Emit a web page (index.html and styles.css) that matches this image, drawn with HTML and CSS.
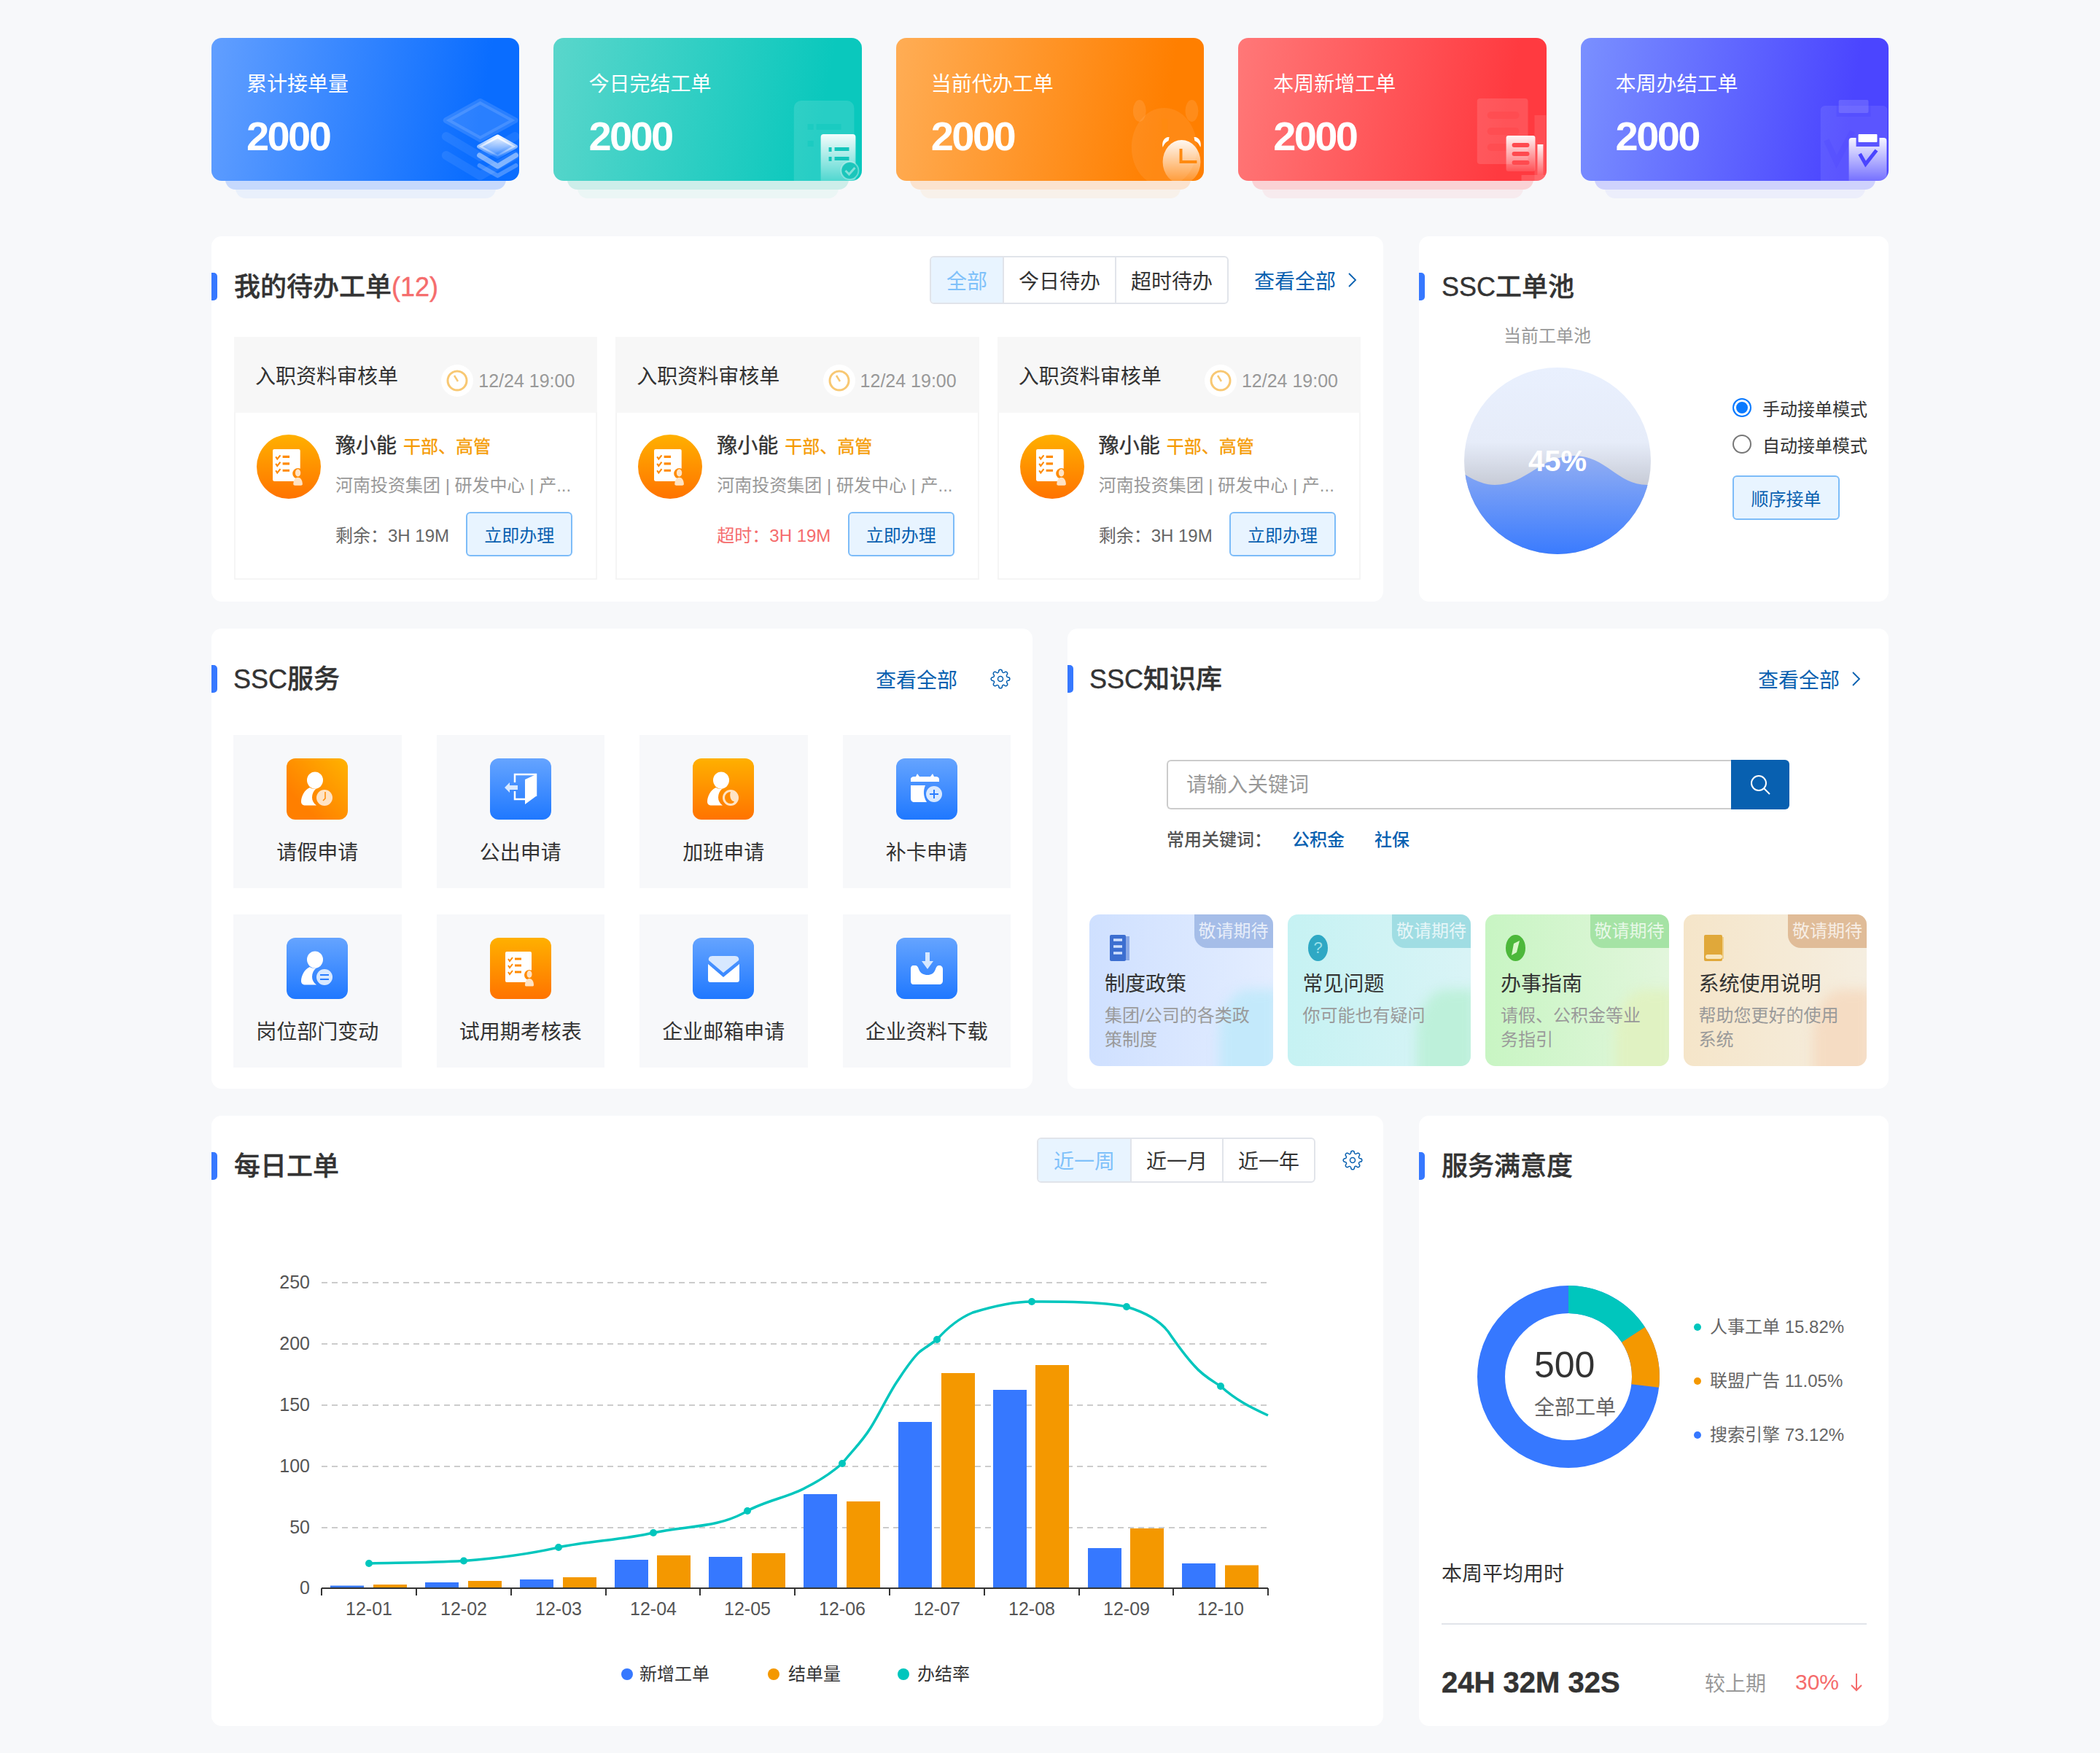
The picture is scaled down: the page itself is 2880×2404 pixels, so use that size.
FILE: index.html
```html
<!DOCTYPE html>
<html lang="zh-CN">

<head>
  <meta charset="UTF-8">
  <title>SSC工作台</title>
  <link rel="stylesheet" href="styles.css">
</head>

<body>
  <svg class="defs" width="0" height="0">
    <defs>
      <linearGradient id="fade" x1="0" y1="0" x2="0" y2="1">
        <stop offset="0" stop-color="#fff" stop-opacity=".95" />
        <stop offset="1" stop-color="#fff" stop-opacity=".12" />
      </linearGradient>
      <linearGradient id="gradBlue" x1="0" y1="0" x2="0" y2="1">
        <stop offset="0" stop-color="#65a4ff" />
        <stop offset="1" stop-color="#1f78ff" />
      </linearGradient>
      <linearGradient id="gradOrange" x1="0" y1="0" x2="0" y2="1">
        <stop offset="0" stop-color="#ffb000" />
        <stop offset="1" stop-color="#ff7300" />
      </linearGradient>
      <linearGradient id="gradDiag" x1="1" y1="0" x2="0" y2="1">
        <stop offset="0" stop-color="#ffb300" />
        <stop offset=".75" stop-color="#ff7f00" />
      </linearGradient>
      <linearGradient id="liquidBg" x1="0" y1="0" x2="0" y2="1">
        <stop offset="0" stop-color="#e9f0fe" />
        <stop offset=".4" stop-color="#e6ecf9" />
        <stop offset=".65" stop-color="#c4c8d3" />
      </linearGradient>
      <linearGradient id="liquidWater" x1="0" y1="0" x2="0" y2="1">
        <stop offset="0" stop-color="#92aef3" />
        <stop offset="1" stop-color="#3a7bfe" />
      </linearGradient>
      <symbol id="person" viewBox="0 0 84 84">
        <ellipse cx="39" cy="30" rx="11" ry="11.5" fill="#fff" />
        <path d="M32 40c-8 3-12 13-12 19 0 4 2 5.500 6 5.500h15c-4-3-6-6.500-6-11 0-5 2-9 6-12.500-3 1-7 1-9-1z" fill="#fff" />
      </symbol>
      <symbol id="checklist" viewBox="0 0 84 84">
        <rect x="21" y="19" width="36" height="42" rx="2" fill="#fff" />
        <path d="M25 29l2 3 4-5M25 38l2 3 4-5M25 47l2 3 4-5" fill="none" stroke="#ff8a00" stroke-width="2" />
        <path d="M34 29h9M34 38h9M34 47h9" stroke="#ff8a00" stroke-width="3" />
        <circle cx="54" cy="51" r="7" fill="#ff8a00" />
        <ellipse cx="54" cy="50" rx="3.500" ry="5" fill="#ffe3c4" />
        <path d="M48 65c0-6 3-9 6-9s6 3 6 9c0 1-1 1.500-2 1.500h-8c-1 0-2-.5-2-1.500z" fill="#ffe3c4" />
      </symbol>
      <symbol id="gear" viewBox="0 0 24 24">
        <g fill="none" stroke="#0860b0" stroke-width="1.300">
          <circle cx="12" cy="12" r="3" />
          <path d="M19.400 15a1.650 1.650 0 0 0 .33 1.820l.06.06a2 2 0 0 1 0 2.830 2 2 0 0 1-2.830 0l-.06-.06a1.650 1.650 0 0 0-1.820-.33 1.650 1.650 0 0 0-1 1.510V21a2 2 0 0 1-2 2 2 2 0 0 1-2-2v-.09A1.650 1.650 0 0 0 9 19.400a1.650 1.650 0 0 0-1.820.33l-.06.06a2 2 0 0 1-2.830 0 2 2 0 0 1 0-2.830l.06-.06a1.650 1.650 0 0 0 .33-1.820 1.650 1.650 0 0 0-1.510-1H3a2 2 0 0 1-2-2 2 2 0 0 1 2-2h.09A1.650 1.650 0 0 0 4.600 9a1.650 1.650 0 0 0-.33-1.820l-.06-.06a2 2 0 0 1 0-2.830 2 2 0 0 1 2.830 0l.06.06a1.650 1.650 0 0 0 1.820.33H9a1.650 1.650 0 0 0 1-1.510V3a2 2 0 0 1 2-2 2 2 0 0 1 2 2v.09a1.650 1.650 0 0 0 1 1.510 1.650 1.650 0 0 0 1.820-.33l.06-.06a2 2 0 0 1 2.830 0 2 2 0 0 1 0 2.830l-.06.06a1.650 1.650 0 0 0-.33 1.820V9a1.650 1.650 0 0 0 1.510 1H21a2 2 0 0 1 2 2 2 2 0 0 1-2 2h-.09a1.650 1.650 0 0 0-1.510 1z" />
        </g>
      </symbol>
      <symbol id="chevron" viewBox="0 0 16 24">
        <path d="M4 3l9 9-9 9" fill="none" stroke="#0860b0" stroke-width="1.800" />
      </symbol>
      <symbol id="timer" viewBox="0 0 44 44">
        <circle cx="22" cy="22" r="22" fill="#fff" />
        <circle cx="22" cy="22" r="13" fill="none" stroke="#f8c873" stroke-width="3" />
        <path d="M18 15l5 8" stroke="#f8c873" stroke-width="2.500" />
      </symbol>
    </defs>
  </svg>

  <div class="page">

    <!-- top numbers -->
    <div class="stats">
      <div class="stat stat-blue">
        <div class="stat-body">
          <p class="stat-label">累计接单量</p>
          <p class="stat-num">2000</p>
          <svg class="stat-deco" viewBox="0 0 424 196" preserveAspectRatio="none">
            <path d="M370 87L418 113 370 139 323 113z" fill="#fff" fill-opacity=".13" stroke="#fff" stroke-opacity=".13" stroke-width="8" stroke-linejoin="round" />
            <path d="M323 135l47 28 48-28M323 161l47 28 48-28" fill="none" stroke="#fff" stroke-opacity=".08" stroke-width="12" stroke-linecap="round" stroke-linejoin="round" />
            <path d="M394 135L419 149 394 163 368 149z" fill="url(#fade)" stroke="url(#fade)" stroke-width="5" stroke-linejoin="round" />
            <path d="M369 161l25 15 25-15" fill="none" stroke="#fff" stroke-opacity=".45" stroke-width="7" stroke-linecap="round" stroke-linejoin="round" />
            <path d="M369 175l25 14 25-14" fill="none" stroke="#fff" stroke-opacity=".25" stroke-width="6" stroke-linecap="round" stroke-linejoin="round" />
          </svg>
        </div>
      </div>
      <div class="stat stat-teal">
        <div class="stat-body">
          <p class="stat-label">今日完结工单</p>
          <p class="stat-num">2000</p>
          <svg class="stat-deco" viewBox="0 0 424 196" preserveAspectRatio="none">
            <rect x="331" y="86" width="83" height="120" rx="10" fill="#fff" fill-opacity=".12" />
            <path d="M350 118h8v8h-8zM362 118h34v8h-34zM350 141h8v8h-8z" fill="#0ac8bd" fill-opacity=".45" />
            <rect x="368" y="132" width="48" height="70" rx="4" fill="url(#fade)" />
            <path d="M379 150h4v6h-4zM387 150h20v5h-20zM379 163h4v6h-4zM387 163h20v5h-20z" fill="#13c5bb" />
            <circle cx="408" cy="182" r="12" fill="#1ac6bb" stroke="#fff" stroke-opacity=".35" stroke-width="2" />
            <path d="M402 182l5 5 8-9" fill="none" stroke="#fff" stroke-opacity=".45" stroke-width="3" />
          </svg>
        </div>
      </div>
      <div class="stat stat-orange">
        <div class="stat-body">
          <p class="stat-label">当前代办工单</p>
          <p class="stat-num">2000</p>
          <svg class="stat-deco" viewBox="0 0 424 196" preserveAspectRatio="none">
            <ellipse cx="369" cy="150" rx="45" ry="54" fill="#fff" fill-opacity=".08" />
            <ellipse cx="335" cy="100" rx="9" ry="15" fill="#fff" fill-opacity=".1" />
            <ellipse cx="407" cy="100" rx="9" ry="15" fill="#fff" fill-opacity=".1" />
            <path d="M366 111h8v40h-8z" fill="#ff8a10" />
            <ellipse cx="393" cy="170" rx="26" ry="30" fill="url(#fade)" />
            <path d="M367 150c-2-8 3-15 9-14l-1 5c-3 1-6 4-8 9zM419 150c2-8-3-15-9-14l1 5c3 1 6 4 8 9z" fill="#fff" />
            <path d="M390 152h4v16h20v4h-24z" fill="#ff8a10" />
          </svg>
        </div>
      </div>
      <div class="stat stat-red">
        <div class="stat-body">
          <p class="stat-label">本周新增工单</p>
          <p class="stat-num">2000</p>
          <svg class="stat-deco" viewBox="0 0 424 196" preserveAspectRatio="none">
            <rect x="329" y="83" width="70" height="90" rx="4" fill="#fff" fill-opacity=".13" />
            <rect x="343" y="101" width="44" height="10" rx="5" fill="#ff4a4f" fill-opacity=".7" />
            <rect x="343" y="123" width="44" height="10" rx="5" fill="#ff4a4f" fill-opacity=".7" />
            <rect x="343" y="145" width="44" height="10" rx="5" fill="#ff4a4f" fill-opacity=".7" />
            <rect x="408" y="106" width="16" height="90" fill="#fff" fill-opacity=".1" />
            <rect x="390" y="188" width="34" height="8" fill="#fff" fill-opacity=".15" />
            <rect x="369" y="134" width="40" height="49" rx="3" fill="url(#fade)" />
            <rect x="377" y="144" width="24" height="6" rx="3" fill="#ff4a4f" />
            <rect x="377" y="156" width="24" height="6" rx="3" fill="#ff4a4f" />
            <rect x="377" y="168" width="24" height="6" rx="3" fill="#ff4a4f" />
            <rect x="412" y="146" width="8" height="42" fill="url(#fade)" />
          </svg>
        </div>
      </div>
      <div class="stat stat-indigo">
        <div class="stat-body">
          <p class="stat-label">本周办结工单</p>
          <p class="stat-num">2000</p>
          <svg class="stat-deco" viewBox="0 0 424 196" preserveAspectRatio="none">
            <rect x="330" y="93" width="92" height="110" rx="6" fill="#fff" fill-opacity=".09" />
            <rect x="352" y="93" width="47" height="15" fill="#4b45ff" fill-opacity=".35" />
            <rect x="355" y="85" width="41" height="18" rx="2" fill="#fff" fill-opacity=".15" />
            <path d="M338 140l14 30 22-42" fill="none" stroke="#4b45ff" stroke-opacity=".25" stroke-width="8" />
            <rect x="369" y="137" width="52" height="62" rx="4" fill="url(#fade)" />
            <rect x="379" y="136" width="32" height="13" fill="#5a55ff" />
            <rect x="382" y="132" width="26" height="11" rx="1" fill="#fff" />
            <path d="M384 159l8 14 15-19" fill="none" stroke="#4b45ff" stroke-width="5" />
          </svg>
        </div>
      </div>
    </div>

    <div class="row row-wide">
      <!-- pending orders -->
      <section class="panel panel-todo">
        <div class="panel-head">
          <span class="bar"></span>
          <h2 class="panel-title">我的待办工单<span class="count">(12)</span></h2>
          <div class="head-right head-lift">
            <div class="tabs">
              <span class="tab active">全部</span>
              <span class="tab">今日待办</span>
              <span class="tab">超时待办</span>
            </div>
            <a class="more">查看全部</a>
            <svg class="chevron" width="16" height="24"><use href="#chevron" /></svg>
          </div>
        </div>
        <div class="orders">
          <div class="order">
            <div class="order-head">
              <span class="order-name">入职资料审核单</span>
              <span class="order-time"><svg width="44" height="44"><use href="#timer" /></svg>12/24 19:00</span>
            </div>
            <div class="order-body">
              <svg class="avatar" width="88" height="88" viewBox="0 0 84 84"><circle cx="42" cy="42" r="42" fill="url(#gradOrange)" /><use href="#checklist" width="84" height="84" /></svg>
              <div class="order-info">
                <p class="order-user">豫小能<span class="order-tags">干部、高管</span></p>
                <p class="order-org">河南投资集团 | 研发中心 | 产...</p>
                <div class="order-foot">
                  <span class="order-left">剩余：3H 19M</span>
                  <button class="btn">立即办理</button>
                </div>
              </div>
            </div>
          </div>
          <div class="order">
            <div class="order-head">
              <span class="order-name">入职资料审核单</span>
              <span class="order-time"><svg width="44" height="44"><use href="#timer" /></svg>12/24 19:00</span>
            </div>
            <div class="order-body">
              <svg class="avatar" width="88" height="88" viewBox="0 0 84 84"><circle cx="42" cy="42" r="42" fill="url(#gradOrange)" /><use href="#checklist" width="84" height="84" /></svg>
              <div class="order-info">
                <p class="order-user">豫小能<span class="order-tags">干部、高管</span></p>
                <p class="order-org">河南投资集团 | 研发中心 | 产...</p>
                <div class="order-foot">
                  <span class="order-left late">超时：3H 19M</span>
                  <button class="btn">立即办理</button>
                </div>
              </div>
            </div>
          </div>
          <div class="order">
            <div class="order-head">
              <span class="order-name">入职资料审核单</span>
              <span class="order-time"><svg width="44" height="44"><use href="#timer" /></svg>12/24 19:00</span>
            </div>
            <div class="order-body">
              <svg class="avatar" width="88" height="88" viewBox="0 0 84 84"><circle cx="42" cy="42" r="42" fill="url(#gradOrange)" /><use href="#checklist" width="84" height="84" /></svg>
              <div class="order-info">
                <p class="order-user">豫小能<span class="order-tags">干部、高管</span></p>
                <p class="order-org">河南投资集团 | 研发中心 | 产...</p>
                <div class="order-foot">
                  <span class="order-left">剩余：3H 19M</span>
                  <button class="btn">立即办理</button>
                </div>
              </div>
            </div>
          </div>
        </div>
      </section>

      <!-- order pool -->
      <section class="panel panel-pool">
        <div class="panel-head">
          <span class="bar"></span>
          <h2 class="panel-title">SSC工单池</h2>
        </div>
        <div class="pool">
          <div class="pool-left">
            <p class="pool-label">当前工单池</p>
            <svg class="liquid" width="256" height="256" viewBox="0 0 256 256">
              <clipPath id="liquidClip"><circle cx="128" cy="128" r="128" /></clipPath>
              <g clip-path="url(#liquidClip)">
                <rect width="256" height="256" fill="url(#liquidBg)" />
                <path d="M0 146C14 155 28 161 42 161 85 161 105 121 151 121 195 121 210 161 251 161H256V256H0z" fill="url(#liquidWater)" />
              </g>
              <text class="liquid-text" x="128" y="142" text-anchor="middle">45%</text>
            </svg>
          </div>
          <div class="pool-right">
            <label class="radio"><span class="radio-dot on"></span>手动接单模式</label>
            <label class="radio"><span class="radio-dot"></span>自动接单模式</label>
            <button class="btn btn-seq">顺序接单</button>
          </div>
        </div>
      </section>
    </div>

    <div class="row row-half">
      <!-- services -->
      <section class="panel panel-service">
        <div class="panel-head">
          <span class="bar"></span>
          <h2 class="panel-title">SSC服务</h2>
          <div class="head-right">
            <a class="more">查看全部</a>
            <svg class="gear" width="28" height="28"><use href="#gear" /></svg>
          </div>
        </div>
        <div class="services">
          <div class="service">
            <svg class="service-icon" width="84" height="84" viewBox="0 0 84 84">
              <rect width="84" height="84" rx="12" fill="url(#gradDiag)" />
              <use href="#person" width="84" height="84" />
              <circle cx="52" cy="54" r="11" fill="#ffe3c4" />
              <path d="M53 46v9l-3 3" fill="none" stroke="#ff8a00" stroke-width="1.500" />
            </svg>
            <span>请假申请</span>
          </div>
          <div class="service">
            <svg class="service-icon" width="84" height="84" viewBox="0 0 84 84">
              <rect width="84" height="84" rx="12" fill="url(#gradBlue)" />
              <path d="M34 33V22H63V52M34 45V56H48" fill="none" stroke="#fff" stroke-width="2.500" />
              <path d="M48 29L63 22V52L48 63z" fill="#fff" />
              <path d="M20 40l7-7v4h11v6H27v4z" fill="#d7e8ff" />
            </svg>
            <span>公出申请</span>
          </div>
          <div class="service">
            <svg class="service-icon" width="84" height="84" viewBox="0 0 84 84">
              <rect width="84" height="84" rx="12" fill="url(#gradOrange)" />
              <use href="#person" width="84" height="84" />
              <circle cx="52" cy="54" r="11" fill="#ffe3c4" />
              <path d="M52 46a8 8 0 0 0 0 16c3 0 5-2 5-3-5 0-7-8-5-13z" fill="#ff8a00" />
            </svg>
            <span>加班申请</span>
          </div>
          <div class="service">
            <svg class="service-icon" width="84" height="84" viewBox="0 0 84 84">
              <rect width="84" height="84" rx="12" fill="url(#gradBlue)" />
              <path d="M20 32v-3c0-3 2-4 5-4h2l2-4 3 4h15l3-4 2 4h2c3 0 5 1 5 4v3z" fill="#fff" />
              <path d="M20 37h20c-3 7-3 15 2 23H25c-3 0-5-2-5-5z" fill="#fff" />
              <circle cx="52" cy="49" r="11" fill="#d7e8ff" />
              <path d="M52 43v12M46 49h12" stroke="#2a7dff" stroke-width="2" />
            </svg>
            <span>补卡申请</span>
          </div>
          <div class="service">
            <svg class="service-icon" width="84" height="84" viewBox="0 0 84 84">
              <rect width="84" height="84" rx="12" fill="url(#gradBlue)" />
              <use href="#person" width="84" height="84" />
              <circle cx="52" cy="54" r="11" fill="#d7e8ff" />
              <path d="M46 51h12M46 57h12" stroke="#2a7dff" stroke-width="2" />
            </svg>
            <span>岗位部门变动</span>
          </div>
          <div class="service">
            <svg class="service-icon" width="84" height="84" viewBox="0 0 84 84">
              <rect width="84" height="84" rx="12" fill="url(#gradOrange)" />
              <use href="#checklist" width="84" height="84" />
            </svg>
            <span>试用期考核表</span>
          </div>
          <div class="service">
            <svg class="service-icon" width="84" height="84" viewBox="0 0 84 84">
              <rect width="84" height="84" rx="12" fill="url(#gradBlue)" />
              <path d="M21 36l21 18 22-18v21c0 3-1 4-4 4H25c-3 0-4-1-4-4z" fill="#fff" />
              <path d="M27 25h31c4 0 6 3 5 6L42 48 22 31c-1-3 1-6 5-6z" fill="#d7e8ff" />
            </svg>
            <span>企业邮箱申请</span>
          </div>
          <div class="service">
            <svg class="service-icon" width="84" height="84" viewBox="0 0 84 84">
              <rect width="84" height="84" rx="12" fill="url(#gradBlue)" />
              <path d="M24 38h2c3 0 4 2 5 5 2 6 7 8 12 8s9-2 11-8c1-3 2-5 5-5 3 0 5 2 5 5v16c0 3-2 5-5 5H24c-3 0-4-2-4-5V43c0-3 1-5 4-5z" fill="#fff" />
              <path d="M40 20h6v12h5l-8 11-8-11h5z" fill="#d7e8ff" />
            </svg>
            <span>企业资料下载</span>
          </div>
        </div>
      </section>

      <!-- knowledge base -->
      <section class="panel panel-know">
        <div class="panel-head">
          <span class="bar"></span>
          <h2 class="panel-title">SSC知识库</h2>
          <div class="head-right head-more">
            <a class="more">查看全部</a>
            <svg class="chevron" width="16" height="24"><use href="#chevron" /></svg>
          </div>
        </div>
        <div class="search">
          <input class="search-input" placeholder="请输入关键词">
          <button class="search-btn">
            <svg width="32" height="32" viewBox="0 0 32 32"><circle cx="14" cy="14" r="10" fill="none" stroke="#fff" stroke-width="2" /><path d="M21 21l8 8" stroke="#fff" stroke-width="2" /></svg>
          </button>
        </div>
        <p class="keywords">常用关键词：<a>公积金</a><a>社保</a></p>
        <div class="kb-list">
          <div class="kb kb-blue">
            <span class="kb-blob"></span>
            <span class="kb-badge">敬请期待</span>
            <svg class="kb-icon" width="27" height="36" viewBox="0 0 27 36">
              <rect x="20" y="2" width="7" height="33" fill="#8aa8e6" />
              <rect width="22" height="36" rx="2" fill="#3c6ed0" />
              <path d="M5 7h12M5 16h12M5 25h12" stroke="#cfe0ff" stroke-width="3.500" />
            </svg>
            <p class="kb-title">制度政策</p>
            <p class="kb-desc">集团/公司的各类政策制度</p>
          </div>
          <div class="kb kb-teal">
            <span class="kb-blob"></span>
            <span class="kb-badge">敬请期待</span>
            <svg class="kb-icon" width="27" height="36" viewBox="0 0 27 36">
              <ellipse cx="13.500" cy="18" rx="13.500" ry="18" fill="#2fa8c4" />
              <text class="kb-mark" x="13.500" y="25" text-anchor="middle">?</text>
            </svg>
            <p class="kb-title">常见问题</p>
            <p class="kb-desc">你可能也有疑问</p>
          </div>
          <div class="kb kb-green">
            <span class="kb-blob"></span>
            <span class="kb-badge">敬请期待</span>
            <svg class="kb-icon" width="27" height="36" viewBox="0 0 27 36">
              <ellipse cx="13.500" cy="18" rx="13.500" ry="18" fill="#4cb83a" />
              <path d="M19 8l-4 16-7 4 3-16z" fill="#d9f7c9" />
            </svg>
            <p class="kb-title">办事指南</p>
            <p class="kb-desc">请假、公积金等业务指引</p>
          </div>
          <div class="kb kb-tan">
            <span class="kb-blob"></span>
            <span class="kb-badge">敬请期待</span>
            <svg class="kb-icon" width="27" height="36" viewBox="0 0 27 36">
              <rect width="25" height="36" rx="2" fill="#e0a83a" />
              <rect x="25" y="3" width="2" height="30" fill="#f0cf8a" />
              <rect x="2" y="27" width="23" height="6" rx="3" fill="#f8e6bd" />
            </svg>
            <p class="kb-title">系统使用说明</p>
            <p class="kb-desc">帮助您更好的使用系统</p>
          </div>
        </div>
      </section>
    </div>

    <div class="row row-wide">
      <!-- daily orders chart -->
      <section class="panel panel-daily">
        <div class="panel-head">
          <span class="bar"></span>
          <h2 class="panel-title">每日工单</h2>
          <div class="head-right head-lift-sm">
            <div class="tabs tabs-sm">
              <span class="tab active">近一周</span>
              <span class="tab">近一月</span>
              <span class="tab">近一年</span>
            </div>
            <svg class="gear" width="28" height="28"><use href="#gear" /></svg>
          </div>
        </div>
        <svg class="chart" width="1607" height="700" viewBox="290 1640 1607 700">
          <g class="grid-lines">
            <path d="M441 1759H1739M441 1843H1739M441 1927H1739M441 2011H1739M441 2095H1739" />
          </g>
          <g class="axis-y" text-anchor="end">
            <text x="425" y="1767">250</text>
            <text x="425" y="1851">200</text>
            <text x="425" y="1935">150</text>
            <text x="425" y="2019">100</text>
            <text x="425" y="2103">50</text>
            <text x="425" y="2186">0</text>
          </g>
          <g fill="#3678ff">
            <rect x="453" y="2174.500" width="46" height="3.500" />
            <rect x="583" y="2170" width="46" height="8" />
            <rect x="713" y="2166" width="46" height="12" />
            <rect x="843" y="2139" width="46" height="39" />
            <rect x="972" y="2135" width="46" height="43" />
            <rect x="1102" y="2049" width="46" height="129" />
            <rect x="1232" y="1950" width="46" height="228" />
            <rect x="1362" y="1906" width="46" height="272" />
            <rect x="1492" y="2123" width="46" height="55" />
            <rect x="1621" y="2144" width="46" height="34" />
          </g>
          <g fill="#f49800">
            <rect x="512" y="2173" width="46" height="5" />
            <rect x="642" y="2168" width="46" height="10" />
            <rect x="772" y="2163" width="46" height="15" />
            <rect x="901" y="2133" width="46" height="45" />
            <rect x="1031" y="2130" width="46" height="48" />
            <rect x="1161" y="2059" width="46" height="119" />
            <rect x="1291" y="1883" width="46" height="295" />
            <rect x="1420" y="1872" width="46" height="306" />
            <rect x="1550" y="2096" width="46" height="82" />
            <rect x="1680" y="2146.500" width="46" height="31.500" />
          </g>
          <path class="axis-x" d="M441 2178H1739M441 2178V2188M571 2178V2188M701 2178V2188M831 2178V2188M960 2178V2188M1090 2178V2188M1220 2178V2188M1350 2178V2188M1480 2178V2188M1609 2178V2188M1739 2178V2188" />
          <g class="axis-labels" text-anchor="middle">
            <text x="506" y="2215">12-01</text>
            <text x="636" y="2215">12-02</text>
            <text x="766" y="2215">12-03</text>
            <text x="896" y="2215">12-04</text>
            <text x="1025" y="2215">12-05</text>
            <text x="1155" y="2215">12-06</text>
            <text x="1285" y="2215">12-07</text>
            <text x="1415" y="2215">12-08</text>
            <text x="1545" y="2215">12-09</text>
            <text x="1674" y="2215">12-10</text>
          </g>
          <path class="rate-line" d="M506 2144C549 2143 592 2143 636 2140.500C680 2137 722 2132 766 2122C810 2113 852 2112 896 2102C940 2092 985 2096 1025 2072C1050 2058 1085 2052 1105 2040C1125 2030 1140 2020 1155 2007C1168 1990 1181 1979 1194 1958C1206 1939 1218 1913 1230 1895C1240 1880 1250 1864 1261 1854C1269 1848 1277 1843 1285 1837C1300 1820 1315 1808 1334 1800C1360 1792 1390 1785 1415 1785C1440 1785 1510 1784 1545 1792C1565 1798 1588 1808 1602 1826C1615 1845 1626 1860 1638 1873C1650 1887 1662 1893 1674 1901C1695 1920 1715 1930 1739 1941" />
          <g fill="#00c6bd">
            <circle cx="506" cy="2144" r="5" />
            <circle cx="636" cy="2140.500" r="5" />
            <circle cx="766" cy="2122" r="5" />
            <circle cx="896" cy="2102" r="5" />
            <circle cx="1025" cy="2072" r="5" />
            <circle cx="1155" cy="2007" r="5" />
            <circle cx="1285" cy="1837" r="5" />
            <circle cx="1415" cy="1785" r="5" />
            <circle cx="1545" cy="1792" r="5" />
            <circle cx="1674" cy="1901" r="5" />
          </g>
          <g class="chart-legend">
            <circle cx="860" cy="2296" r="8" fill="#3678ff" />
            <text x="877" y="2304">新增工单</text>
            <circle cx="1061" cy="2296" r="8" fill="#f49800" />
            <text x="1081" y="2304">结单量</text>
            <circle cx="1239" cy="2296" r="8" fill="#00c6bd" />
            <text x="1258" y="2304">办结率</text>
          </g>
        </svg>
      </section>

      <!-- satisfaction -->
      <section class="panel panel-satisfy">
        <div class="panel-head">
          <span class="bar"></span>
          <h2 class="panel-title">服务满意度</h2>
        </div>
        <div class="donut-row">
          <svg class="donut" width="250" height="250" viewBox="0 0 250 250">
            <g fill="none" stroke-width="38" transform="rotate(-90 125 125)">
              <circle cx="125" cy="125" r="106" stroke="#3678ff" />
              <circle cx="125" cy="125" r="106" stroke="#00c6bd" stroke-dasharray="105.400 666" />
              <circle cx="125" cy="125" r="106" stroke="#f49800" stroke-dasharray="73.600 666" stroke-dashoffset="-105.400" />
            </g>
            <text class="donut-num" x="78" y="126">500</text>
            <text class="donut-label" x="78" y="177">全部工单</text>
          </svg>
          <ul class="donut-legend">
            <li><i class="dot dot-teal"></i>人事工单 15.82%</li>
            <li><i class="dot dot-orange"></i>联盟广告 11.05%</li>
            <li><i class="dot dot-blue"></i>搜索引擎 73.12%</li>
          </ul>
        </div>
        <p class="avg-title">本周平均用时</p>
        <div class="avg-row">
          <span class="avg-time">24H 32M 32S</span>
          <span class="avg-compare">
            <span class="avg-prev">较上期</span>
            <span class="avg-rate">30%</span>
            <svg width="16" height="26" viewBox="0 0 16 26"><path d="M8 1v23M1 17l7 7 7-7" fill="none" stroke="#f56c6c" stroke-width="2" /></svg>
          </span>
        </div>
      </section>
    </div>
  </div>
</body>

</html>
```

FILE: styles.css
```css
* {
  margin: 0;
  padding: 0;
  box-sizing: border-box;
}

body {
  background-color: #f7f8fa;
  font-family: "Liberation Sans", "Noto Sans CJK SC", sans-serif;
  color: #333333;
}

.defs {
  display: block;
  height: 0;
}

.page {
  width: 2300px;
  margin: 0 auto;
  padding-top: 52px;
  padding-bottom: 37px;
}

/* top numbers */
.stats {
  display: grid;
  grid-template-columns: repeat(5, 1fr);
  gap: 47px;
  margin-bottom: 76px;
}

.stat {
  position: relative;
  height: 196px;
  isolation: isolate;
}

.stat::before,
.stat::after {
  content: "";
  position: absolute;
  z-index: -1;
  border-radius: 0 0 14px 14px;
}

.stat::before {
  left: 19px;
  right: 18px;
  bottom: -12px;
  height: 30px;
  background-color: var(--layer1);
}

.stat::after {
  left: 33px;
  right: 32px;
  bottom: -24px;
  height: 30px;
  background-color: var(--layer2);
  z-index: -2;
}

.stat-body {
  position: relative;
  height: 100%;
  padding: 44px 0 0 48px;
  border-radius: 14px;
  overflow: hidden;
  color: #ffffff;
  background-image: linear-gradient(100deg, var(--from), var(--to) 85%);
}

.stat-blue {
  --from: #629fff;
  --to: #0a6dff;
  --layer1: #c6d9fd;
  --layer2: #e9f0fb;
}

.stat-teal {
  --from: #5ad6cb;
  --to: #0ac8bd;
  --layer1: #cdeeea;
  --layer2: #ebf6f5;
}

.stat-orange {
  --from: #ffad55;
  --to: #ff7f00;
  --layer1: #fbe3cf;
  --layer2: #f8f1ea;
}

.stat-red {
  --from: #ff7878;
  --to: #ff3a40;
  --layer1: #fad2d5;
  --layer2: #f7ebee;
}

.stat-indigo {
  --from: #7a90ff;
  --to: #4b45ff;
  --layer1: #cfd2fd;
  --layer2: #eceefb;
}

.stat-label {
  font-size: 28px;
  line-height: 40px;
}

.stat-num {
  margin-top: 21px;
  font-size: 56px;
  line-height: 60px;
  font-weight: bold;
  letter-spacing: -2.6px;
}

.stat-deco {
  position: absolute;
  left: 0;
  top: 0;
  width: 100%;
  height: 100%;
}

/* panels */
.row {
  display: grid;
  column-gap: 49px;
  margin-bottom: 37px;
}

.row:last-child {
  margin-bottom: 0;
}

.row-wide {
  grid-template-columns: 1607px 644px;
}

.row-half {
  grid-template-columns: 1126px 1126px;
  column-gap: 48px;
}

.panel {
  background-color: #ffffff;
  border-radius: 14px;
  padding-top: 50px;
}

.panel-todo,
.panel-pool {
  height: 501px;
}

.panel-service,
.panel-know {
  height: 631px;
}

.panel-daily,
.panel-satisfy {
  height: 837px;
}

.panel-head {
  display: flex;
  align-items: center;
  height: 38px;
}

.bar {
  width: 8px;
  height: 38px;
  margin-right: 23px;
  background-color: #3678ff;
  border-radius: 0 5px 5px 0;
}

.panel-service .bar,
.panel-know .bar {
  margin-right: 22px;
}

.panel-title {
  padding-top: 2px;
  font-size: 36px;
  font-weight: 500;
  line-height: 38px;
  white-space: nowrap;
  -webkit-text-stroke: 0.4px #333333;
}

.count {
  color: #f56c6c;
  font-weight: 400;
  -webkit-text-stroke: 0.4px #f56c6c;
}

.head-right {
  display: flex;
  align-items: center;
  margin-left: auto;
  padding-right: 30px;
}

.head-lift {
  margin-top: -18px;
  padding-right: 35px;
}

.head-lift-sm {
  margin-top: -16px;
  padding-right: 28px;
}

.head-more {
  padding-right: 37px;
}

.tabs {
  display: flex;
  height: 66px;
  border: 2px solid #e1e4ea;
  border-radius: 6px;
  overflow: hidden;
  font-size: 28px;
  margin-right: 35px;
}

.tab {
  display: flex;
  align-items: center;
  padding: 0 20px;
  border-left: 2px solid #e1e4ea;
}

.tab:first-child {
  border-left: none;
  padding: 0 21px;
}

.tab.active {
  background-color: #e8f4ff;
  color: #7fc1fa;
}

.tabs-sm {
  height: 62px;
  margin-right: 37px;
}

.more {
  font-size: 28px;
  color: #0860b0;
}

.chevron {
  margin-left: 14px;
}

.panel-service .gear {
  margin-left: 45px;
}

/* pending orders */
.orders {
  display: grid;
  grid-template-columns: repeat(3, minmax(0, 1fr));
  gap: 25px;
  margin-top: 50px;
  padding: 0 31px;
}

.order {
  height: 333px;
  border: 2px solid #f5f5f5;
  border-top: none;
}

.order-head {
  display: flex;
  justify-content: space-between;
  align-items: center;
  height: 104px;
  margin: 0 -2px;
  padding: 0 31px 0 29px;
  background-color: #f7f7f7;
}

.order-name {
  font-size: 28px;
}

.order-time {
  display: flex;
  align-items: center;
  gap: 7px;
  margin-top: 16px;
  font-size: 25px;
  color: #999999;
}

.order-body {
  display: flex;
  gap: 20px;
  padding: 30px 30px 0 29px;
}

.avatar {
  flex: none;
}

.order-info {
  flex: 1;
  min-width: 0;
}

.order-user {
  padding-top: 2px;
  font-size: 28px;
  line-height: 28px;
  -webkit-text-stroke: 0.4px #333333;
}

.order-tags {
  margin-left: 9px;
  font-size: 24px;
  color: #f59a00;
  -webkit-text-stroke: 0.3px #f59a00;
}

.order-org {
  margin-top: 22px;
  font-size: 24px;
  line-height: 34px;
  color: #999999;
  white-space: nowrap;
}

.order-foot {
  display: flex;
  justify-content: space-between;
  align-items: center;
  margin-top: 19px;
  padding-right: 2px;
}

.order-left {
  font-size: 24px;
  color: #666666;
}

.order-left.late {
  color: #f56c6c;
}

.btn {
  width: 146px;
  height: 61px;
  border: 2px solid #7dbcf8;
  border-radius: 6px;
  background-color: #e8f4ff;
  color: #0860b0;
  font-family: inherit;
  font-size: 24px;
}

/* pool */
.pool {
  display: flex;
  margin-top: 32px;
  padding-left: 62px;
}

.pool-left {
  width: 256px;
}

.pool-label {
  padding-left: 54px;
  font-size: 24px;
  line-height: 34px;
  color: #999999;
  white-space: nowrap;
}

.liquid {
  display: block;
  margin-top: 26px;
}

.liquid-text {
  font-size: 40px;
  font-weight: bold;
  fill: #ffffff;
}

.pool-right {
  margin-left: 112px;
  padding-top: 98px;
}

.radio {
  display: flex;
  align-items: center;
  height: 34px;
  margin-bottom: 16px;
  font-size: 24px;
  white-space: nowrap;
}

.radio-dot {
  width: 26px;
  height: 26px;
  margin-right: 15px;
  border: 2px solid #777777;
  border-radius: 50%;
}

.radio-dot.on {
  border-color: #0a7aff;
  background-color: #0a7aff;
  box-shadow: inset 0 0 0 3px #ffffff;
}

.btn-seq {
  display: block;
  width: 147px;
  margin-top: 26px;
}

/* services */
.services {
  display: grid;
  grid-template-columns: repeat(4, 1fr);
  grid-auto-rows: 210px;
  gap: 36px 48px;
  margin-top: 58px;
  padding: 0 30px;
}

.service {
  display: flex;
  flex-direction: column;
  align-items: center;
  padding-top: 32px;
  background-color: #f7f8fa;
  font-size: 28px;
  line-height: 40px;
}

.service span {
  margin-top: 26px;
}

/* knowledge */
.search {
  display: flex;
  width: 854px;
  height: 68px;
  margin: 92px 0 0 136px;
}

.search-input {
  flex: 1;
  padding: 2px 0 0 25px;
  border: 2px solid #cccccc;
  border-right: none;
  border-radius: 6px 0 0 6px;
  font-family: inherit;
  font-size: 28px;
  outline: none;
}

.search-input::placeholder {
  color: #999999;
}

.search-btn {
  display: flex;
  align-items: center;
  justify-content: center;
  width: 80px;
  border: none;
  border-radius: 0 6px 6px 0;
  background-color: #0860b0;
}

.keywords {
  margin: 25px 0 0 136px;
  font-size: 24px;
  font-weight: 500;
  line-height: 34px;
  color: #555555;
}

.keywords a {
  margin-left: 41px;
  color: #0860b0;
}

.keywords a:first-child {
  margin-left: 28px;
}

.kb-list {
  display: grid;
  grid-template-columns: repeat(4, 1fr);
  gap: 20px;
  margin-top: 85px;
  padding: 0 30px;
}

.kb {
  position: relative;
  height: 208px;
  padding: 28px 21px 0;
  border-radius: 14px;
  overflow: hidden;
  background-image: linear-gradient(90deg, var(--from), var(--to));
}

.kb-blue {
  --from: #cfe0ff;
  --to: #e3edff;
  --blob: #c3e9fb;
  --badge: #a5bde8;
}

.kb-teal {
  --from: #c6f2f3;
  --to: #d9f4f6;
  --blob: #bdf0da;
  --badge: #a0dde3;
}

.kb-green {
  --from: #c8f5c3;
  --to: #e2f6dc;
  --blob: #e0f2c2;
  --badge: #a5e3a5;
}

.kb-tan {
  --from: #f5e5c9;
  --to: #f5eee0;
  --blob: #f5dcc3;
  --badge: #e0bc98;
}

.kb-blob {
  position: absolute;
  right: -6px;
  bottom: -20px;
  width: 80px;
  height: 125px;
  border-radius: 50% 0 0 0;
  background-color: var(--blob);
  filter: blur(8px);
}

.kb-badge {
  position: absolute;
  top: 0;
  right: 0;
  width: 108px;
  height: 46px;
  border-radius: 0 0 0 18px;
  background-color: var(--badge);
  color: rgba(255, 255, 255, 0.75);
  font-size: 24px;
  line-height: 46px;
  text-align: center;
  white-space: nowrap;
}

.kb-icon {
  position: relative;
  display: block;
  margin-left: 7px;
}

.kb-mark {
  font-size: 22px;
  fill: #9be0ea;
}

.kb-title {
  position: relative;
  margin-top: 12px;
  font-size: 28px;
  line-height: 40px;
}

.kb-desc {
  position: relative;
  margin-top: 6px;
  font-size: 24px;
  line-height: 33px;
  color: #9a9a9a;
}

/* chart */
.chart {
  display: block;
  margin-top: 22px;
}

.grid-lines path {
  fill: none;
  stroke: #cccccc;
  stroke-width: 2;
  stroke-dasharray: 8 6;
}

.axis-x {
  fill: none;
  stroke: #333333;
  stroke-width: 2;
}

.axis-y text,
.axis-labels text {
  font-size: 25px;
  fill: #555555;
}

.rate-line {
  fill: none;
  stroke: #00c6bd;
  stroke-width: 3.5;
}

.chart-legend text {
  font-size: 24px;
  fill: #333333;
}

/* satisfaction */
.donut-row {
  display: flex;
  margin-top: 145px;
  padding-left: 80px;
}

.donut {
  flex: none;
}

.donut-num {
  font-size: 50px;
  fill: #333333;
}

.donut-label {
  font-size: 28px;
  fill: #666666;
}

.donut-legend {
  margin: 40px 0 0 47px;
  list-style: none;
  font-size: 24px;
  line-height: 34px;
  color: #666666;
  white-space: nowrap;
}

.donut-legend li {
  display: flex;
  align-items: center;
  margin-bottom: 40px;
}

.dot {
  width: 10px;
  height: 10px;
  margin-right: 12px;
  border-radius: 50%;
}

.dot-teal {
  background-color: #00c6bd;
}

.dot-orange {
  background-color: #f49800;
}

.dot-blue {
  background-color: #3678ff;
}

.avg-title {
  margin: 114px 30px 0 31px;
  padding-bottom: 47px;
  border-bottom: 2px solid #e1e4ea;
  font-size: 28px;
  line-height: 40px;
}

.avg-row {
  display: flex;
  justify-content: space-between;
  align-items: center;
  margin: 56px 36px 0 31px;
  height: 46px;
}

.avg-time {
  font-size: 40px;
  font-weight: bold;
  -webkit-text-stroke: 0.5px #333333;
}

.avg-compare {
  display: flex;
  align-items: center;
  font-size: 28px;
}

.avg-prev {
  color: #999999;
}

.avg-rate {
  margin: 0 16px 0 40px;
  font-size: 30px;
  color: #f56c6c;
}
```
